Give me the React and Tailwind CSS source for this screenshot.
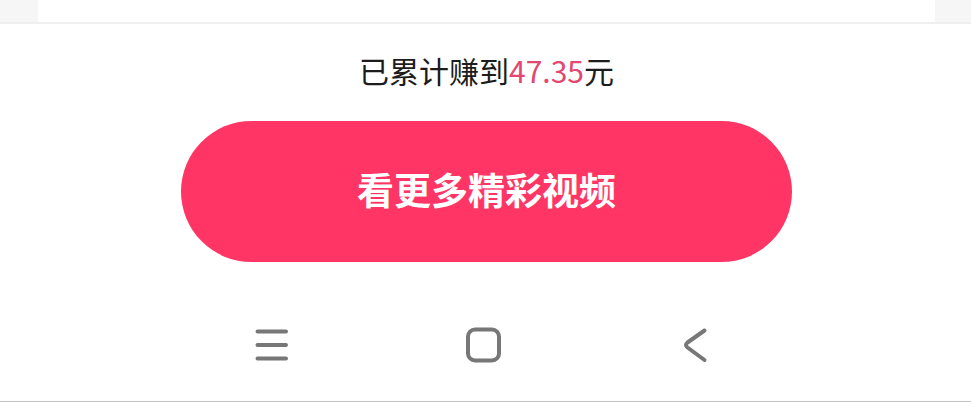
import React from 'react';

const MenuIcon = () => (
  <svg viewBox="0 0 36 36" className="h-9 w-9" fill="none" stroke="#777777" strokeWidth="4" strokeLinecap="round" aria-hidden="true">
    <path d="M4.5 4.5H33M4.5 18H33M4.5 31.5H33" />
  </svg>
);

const HomeIcon = () => (
  <svg viewBox="0 0 36 36" className="h-9 w-9" fill="none" stroke="#777777" strokeWidth="4" aria-hidden="true">
    <rect x="3" y="2.5" width="31" height="31" rx="7" />
  </svg>
);

const BackIcon = () => (
  <svg viewBox="0 0 36 36" className="h-9 w-9" fill="none" stroke="#777777" strokeWidth="4" strokeLinecap="round" strokeLinejoin="round" aria-hidden="true">
    <path d="M27.5 3.5L10.5 15.5Q7.5 18 10.5 20.5L27.5 33" />
  </svg>
);

const NavButton = ({ label, children }) => (
  <button type="button" aria-label={label} className="flex items-center justify-center">
    {children}
  </button>
);

function App() {
  return (
    <div className="border-b border-[#c4c4c4] bg-white font-['Noto_Sans_CJK_SC',sans-serif]">
      <div className="flex h-6 justify-between border-b-2 border-[#efefef]">
        <div className="w-[38px] bg-[#f6f6f6]" />
        <div className="w-9 bg-[#f6f6f6]" />
      </div>

      <main className="flex flex-col items-center pt-6 pl-0.5">
        <p className="text-[30px] leading-[44px] text-[#1c1c1c]">
          已累计赚到<span className="text-[#e2476f]">47.35</span>元
        </p>
        <button
          type="button"
          className="mt-[29px] h-[141px] w-[63%] rounded-full bg-[#ff3665] pb-1 text-[37px] font-bold text-white"
        >
          看更多精彩视频
        </button>
      </main>

      <nav className="grid grid-cols-3 pt-[65px] pr-[17.5%] pb-[38px] pl-[17%]">
        <NavButton label="菜单">
          <MenuIcon />
        </NavButton>
        <NavButton label="主页">
          <HomeIcon />
        </NavButton>
        <NavButton label="返回">
          <BackIcon />
        </NavButton>
      </nav>
    </div>
  );
}

export default App;
